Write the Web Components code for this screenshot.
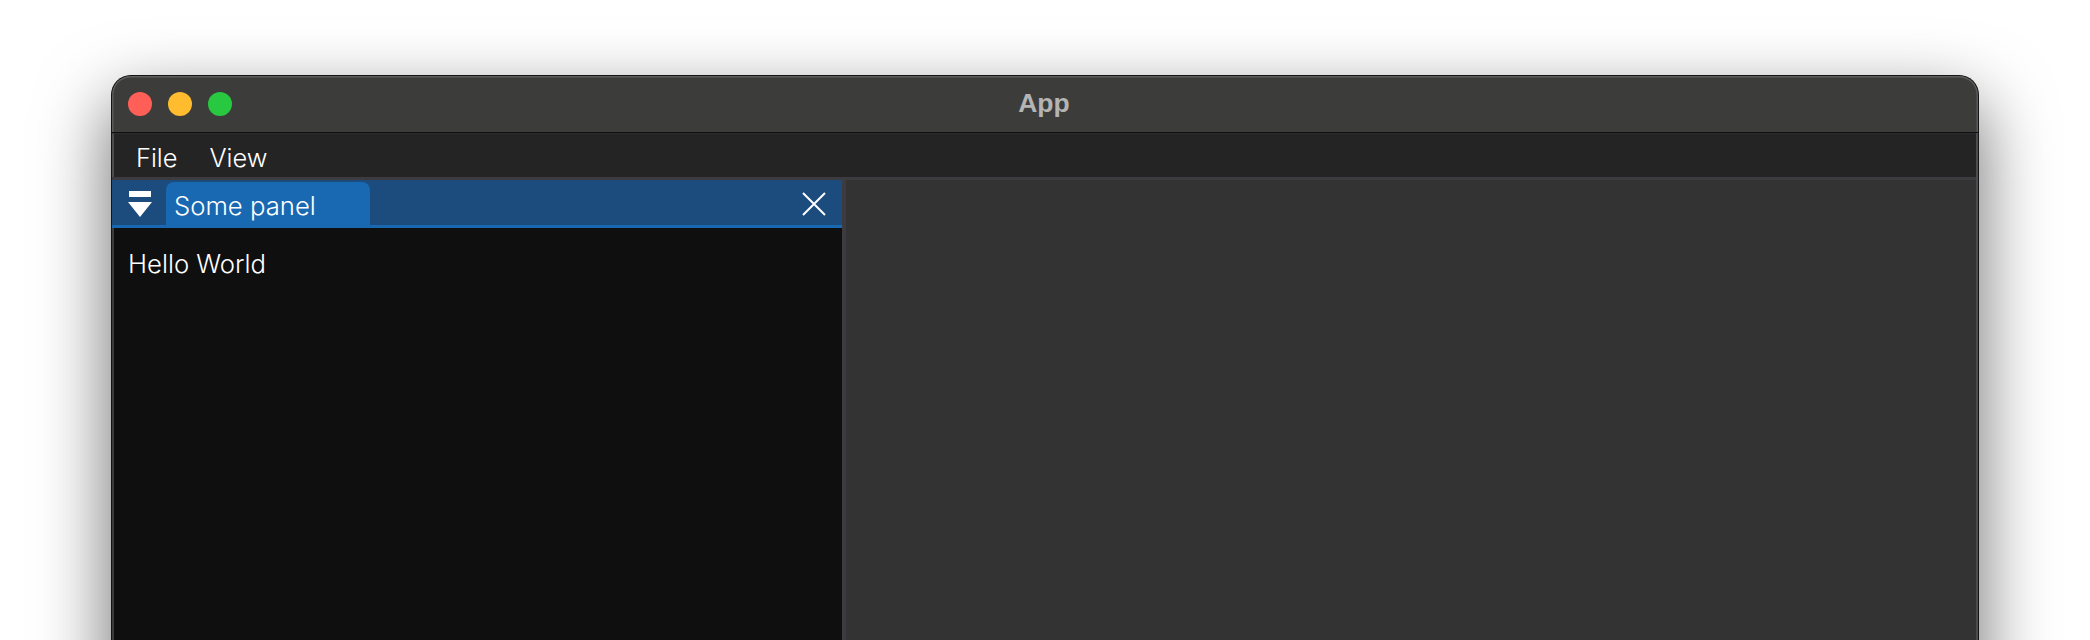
<!DOCTYPE html>
<html>
<head>
<meta charset="utf-8">
<title>App</title>
<style>
  html, body { margin: 0; height: 640px; overflow: hidden; background: #fff; }
  body { padding: 75px 111px 0 111px; box-sizing: border-box; }
</style>
</head>
<body>
<app-window title-text="App">
  <menu-bar>
    <menu-item>File</menu-item>
    <menu-item>View</menu-item>
  </menu-bar>
  <dock-area>
    <dock-panel label="Some panel">Hello World</dock-panel>
  </dock-area>
</app-window>

<script>
class AppWindow extends HTMLElement {
  constructor() {
    super();
    const root = this.attachShadow({ mode: 'open' });
    root.innerHTML = `
      <style>
      :host {
        display: flex;
        flex-direction: column;
        height: 700px;
        box-sizing: border-box;
        border: 1px solid #141414;
        border-bottom: 0;
        border-radius: 20px 20px 0 0;
        background: #3c3c3b;
        box-shadow: 0 28px 70px 2px rgba(0,0,0,.56);
      }
      .inner {
        display: flex;
        flex-direction: column;
        flex: 1;
        min-height: 0;
        border-radius: 19px 19px 0 0;
        overflow: hidden;
      }
      .title {
        position: relative;
        display: flex;
        align-items: center;
        justify-content: center;
        flex: none;
        height: 57px;
        padding: 0 2px 2px 0;
        box-sizing: border-box;
        border-bottom: 1px solid #0e0e0e;
        border-radius: 19px 19px 0 0;
        background: #3c3c3b;
        box-shadow: inset 0 1.5px 0 #5e5e5e, inset 1.5px 0 0 #5a5a5a, inset -1.5px 0 0 #5a5a5a;
        color: #b4b4b4;
        font: bold 26.5px "Liberation Sans", sans-serif;
      }
      .lights {
        position: absolute;
        left: 16px;
        top: 16px;
        display: flex;
        gap: 16px;
      }
      .lights i { width: 24px; height: 24px; border-radius: 50%; }
      .body {
        display: flex;
        flex-direction: column;
        flex: 1;
        min-height: 0;
        padding-right: 2px;
        background: #4c4c50;
      }
      </style>
      <div class="inner">
        <div class="title">
          <div class="lights">
            <i style="background:#ff5f57"></i>
            <i style="background:#febc2e"></i>
            <i style="background:#28c840"></i>
          </div>
          <span id="title"></span>
        </div>
        <div class="body"><slot></slot></div>
      </div>
    `;
    this.$title = root.querySelector('#title');
  }

  connectedCallback() {
    this.$title.textContent = this.getAttribute('title-text') || '';
  }
}

class MenuBar extends HTMLElement {
  constructor() {
    super();
    this.attachShadow({ mode: 'open' }).innerHTML = `
      <style>
      :host {
        display: flex;
        flex: none;
        align-items: center;
        gap: 32px;
        height: 44px;
        padding: 4px 0 0 22px;
        box-sizing: border-box;
        background: #242424;
        border-top: 1px solid #2c2c2c;
        border-left: 2px solid #4c4c50;
        color: #ffffff;
        font: 300 25.4px Inter, sans-serif;
      }
      </style>
      <slot></slot>
    `;
  }
}

class MenuItem extends HTMLElement {
  constructor() {
    super();
    this.attachShadow({ mode: 'open' }).innerHTML = `
      <style>:host { display: block; }</style>
      <slot></slot>
    `;
  }
}

class DockArea extends HTMLElement {
  constructor() {
    super();
    this.attachShadow({ mode: 'open' }).innerHTML = `
      <style>
      :host {
        display: flex;
        flex: 1;
        min-height: 0;
        padding-top: 3px;
        gap: 4px;
        background: #3b3b40;
      }
      .rest { flex: 1; background: #333333; }
      </style>
      <slot></slot>
      <div class="rest"></div>
    `;
  }
}

class DockPanel extends HTMLElement {
  constructor() {
    super();
    const root = this.attachShadow({ mode: 'open' });
    root.innerHTML = `
      <style>
      :host {
        display: flex;
        flex-direction: column;
        flex: none;
        width: 730px;
        background: #0f0f0f;
        color: #ffffff;
        font: 300 25.7px Inter, sans-serif;
      }
      .bar {
        display: flex;
        align-items: flex-end;
        flex: none;
        height: 45px;
        background: #1c4c7e;
        border-bottom: 3px solid #1868b2;
      }
      .menu { flex: none; display: block; margin: 11px 14px 0 16px; align-self: flex-start; }
      .tab {
        display: flex;
        align-items: center;
        flex: none;
        width: 204px;
        height: 43px;
        padding: 3px 0 0 8px;
        box-sizing: border-box;
        background: #1868b2;
        border-radius: 8px 8px 0 0;
      }
      .close { display: block; margin: 12px 16px 0 auto; align-self: flex-start; }
      .content { flex: 1; padding: 20px 14px; border-left: 2px solid #3b3b40; }
      </style>
      <div class="bar">
        <svg class="menu" width="24" height="26" viewBox="0 0 24 26">
          <rect x="1" y="0" width="22" height="6" fill="#fff"/>
          <path d="M0 11H24L12 26Z" fill="#fff"/>
        </svg>
        <div class="tab"><span id="label"></span></div>
        <svg class="close" width="24" height="24" viewBox="0 0 24 24">
          <path d="M1 1L23 23M23 1L1 23" stroke="#fff" stroke-width="2" fill="none"/>
        </svg>
      </div>
      <div class="content"><slot></slot></div>
    `;
    this.$label = root.querySelector('#label');
  }

  connectedCallback() {
    this.$label.textContent = this.getAttribute('label') || '';
  }
}

customElements.define('app-window', AppWindow);
customElements.define('menu-bar', MenuBar);
customElements.define('menu-item', MenuItem);
customElements.define('dock-area', DockArea);
customElements.define('dock-panel', DockPanel);
</script>
</body>
</html>
